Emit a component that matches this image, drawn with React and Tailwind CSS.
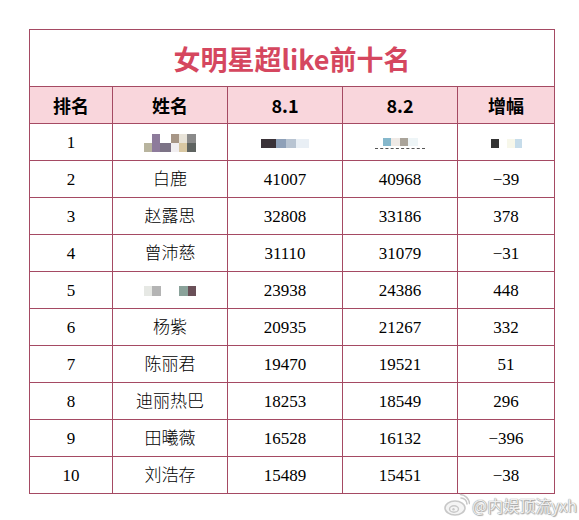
import React from 'react';

const rows = [
  { rank: 1, name: null, a: null, b: null, d: null },
  { rank: 2, name: '白鹿', a: '41007', b: '40968', d: '−39' },
  { rank: 3, name: '赵露思', a: '32808', b: '33186', d: '378' },
  { rank: 4, name: '曾沛慈', a: '31110', b: '31079', d: '−31' },
  { rank: 5, name: 'blur5', a: '23938', b: '24386', d: '448' },
  { rank: 6, name: '杨紫', a: '20935', b: '21267', d: '332' },
  { rank: 7, name: '陈丽君', a: '19470', b: '19521', d: '51' },
  { rank: 8, name: '迪丽热巴', a: '18253', b: '18549', d: '296' },
  { rank: 9, name: '田曦薇', a: '16528', b: '16132', d: '−396' },
  { rank: 10, name: '刘浩存', a: '15489', b: '15451', d: '−38' },
];

function Mosaic({ blocks }) {
  // each column is a stack of [colour, width, height]
  return (
    <div className="flex items-end justify-center">
      {blocks.map((b, i) => (
        <div key={i} className="flex flex-col">
          {b.map((c, j) => (
            <div key={j} style={{ background: c[0], width: c[1], height: c[2] }} />
          ))}
        </div>
      ))}
    </div>
  );
}

const name1 = [
  [['#b8b49e', 8, 9]],
  [['#8d7b9b', 8, 18]],
  [['#7c7386', 11, 9]],
  [['#a79686', 8, 9], ['#f1eef0', 8, 9]],
  [['#e8e3d8', 8, 9], ['#d8c7a2', 8, 9]],
  [['#8a8a8a', 9, 9], ['#5e6360', 9, 9]],
];
const a1 = [
  [['#3a3238', 15, 9]],
  [['#8ea0b8', 10, 9]],
  [['#b8c4d2', 10, 9]],
  [['#e9eff5', 13, 9]],
];
const b1 = [
  [['#86b8cc', 8, 8]],
  [['#efeae6', 9, 8]],
  [['#aaa49a', 8, 8]],
  [['#eef5f7', 10, 8]],
];
const d1 = [
  [['#333333', 8, 9]],
  [['#ffffff', 8, 9]],
  [['#f7f7ea', 8, 9]],
  [['#c6dcea', 7, 9]],
];
const name5 = [
  [['#e6e8e4', 8, 10]],
  [['#b4b4b4', 9, 10]],
  [['#ffffff', 18, 10]],
  [['#8aa29a', 9, 10]],
  [['#6a5058', 8, 10]],
];

const serif = { fontFamily: '"Liberation Serif", "Noto Sans CJK SC", serif' };

function App() {
  return (
    <div className="relative w-[579px] h-[520px] bg-white overflow-hidden">
      <div className="pt-[29px] pl-[29px]">
        <table className="border-collapse table-fixed w-[525px] text-center text-black">
          <colgroup>
            <col className="w-[83px]" />
            <col className="w-[115px]" />
            <col className="w-[115px]" />
            <col className="w-[115px]" />
            <col className="w-[97px]" />
          </colgroup>
          <tbody>
            <tr className="h-[57px]">
              <td
                colSpan={5}
                className="border border-[#a54a63] text-[27px] font-bold text-[#d5475f] pt-[2px]"
                style={{ fontFamily: '"Noto Sans CJK SC", "Liberation Sans", sans-serif' }}
              >
                女明星超like前十名
              </td>
            </tr>
            <tr
              className="h-[37px] bg-[#f9d6dc] text-[18px] font-bold"
              style={{ fontFamily: '"Noto Sans CJK SC", "Liberation Sans", sans-serif' }}
            >
              <td className="border border-[#a54a63]">排名</td>
              <td className="border border-[#a54a63]">姓名</td>
              <td className="border border-[#a54a63]">8.1</td>
              <td className="border border-[#a54a63]">8.2</td>
              <td className="border border-[#a54a63]">增幅</td>
            </tr>
            {rows.map((r) => (
              <tr key={r.rank} className="h-[37px] text-[17px]" style={serif}>
                <td className="border border-[#a54a63] pt-[2px]">{r.rank}</td>
                <td className="border border-[#a54a63] pt-[2px] font-light">
                  {r.name === null ? (
                    <Mosaic blocks={name1} />
                  ) : r.name === 'blur5' ? (
                    <Mosaic blocks={name5} />
                  ) : (
                    r.name
                  )}
                </td>
                <td className="border border-[#a54a63] pt-[2px]">
                  {r.a === null ? <Mosaic blocks={a1} /> : r.a}
                </td>
                <td className="border border-[#a54a63] pt-[2px]">
                  {r.b === null ? (
                    <div className="flex flex-col items-center">
                      <Mosaic blocks={b1} />
                      <div className="mt-[2px] w-[50px] border-t border-dashed border-[#555]" />
                    </div>
                  ) : (
                    r.b
                  )}
                </td>
                <td className="border border-[#a54a63] pt-[2px]">
                  {r.d === null ? <Mosaic blocks={d1} /> : r.d}
                </td>
              </tr>
            ))}
          </tbody>
        </table>
      </div>

      {/* watermark */}
      <div className="absolute left-[444px] top-[493px] flex items-center gap-[2px]">
        <svg width="26" height="24" viewBox="0 0 26 24" fill="none">
          <ellipse cx="11" cy="15" rx="10" ry="7" stroke="#c8c8c8" strokeWidth="1.6" fill="#f4f4f4" />
          <ellipse cx="10" cy="16" rx="4.5" ry="3.2" stroke="#c8c8c8" strokeWidth="1.4" />
          <circle cx="9.5" cy="16.3" r="1.2" fill="#c8c8c8" />
          <path d="M17 5 A6 6 0 0 1 23 11" stroke="#c8c8c8" strokeWidth="1.6" strokeLinecap="round" />
          <path d="M16.5 1.5 A10 10 0 0 1 25.5 10.5" stroke="#c8c8c8" strokeWidth="1.6" strokeLinecap="round" />
        </svg>
        <span
          className="text-[16px] text-[#f0f0f0] [text-shadow:0_0_1px_#999,0_0_1px_#999,1px_1px_1px_#aaa]"
          style={{ fontFamily: '"Noto Sans CJK SC", "Liberation Sans", sans-serif' }}
        >
          @内娱顶流yxh
        </span>
      </div>
    </div>
  );
}

export default App;
